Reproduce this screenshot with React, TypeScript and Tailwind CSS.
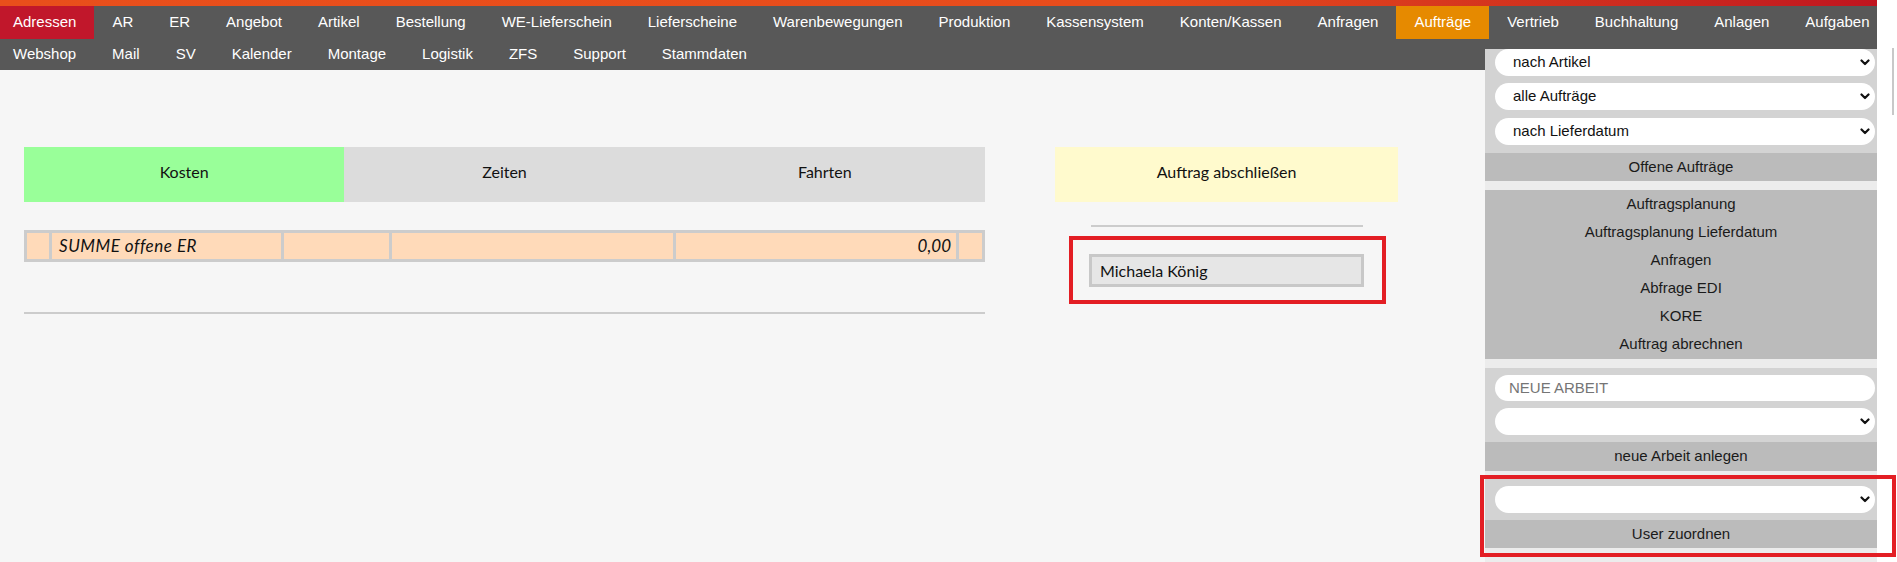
import React from "react";

const row1 = [
  "Adressen",
  "AR",
  "ER",
  "Angebot",
  "Artikel",
  "Bestellung",
  "WE-Lieferschein",
  "Lieferscheine",
  "Warenbewegungen",
  "Produktion",
  "Kassensystem",
  "Konten/Kassen",
  "Anfragen",
  "Aufträge",
  "Vertrieb",
  "Buchhaltung",
  "Anlagen",
  "Aufgaben",
];
const row2 = ["Webshop", "Mail", "SV", "Kalender", "Montage", "Logistik", "ZFS", "Support", "Stammdaten"];

const arial = "font-['Liberation_Sans',Arial,sans-serif]";
const calibri = "font-['Lato','Open_Sans',sans-serif]";

function Chevron() {
  return (
    <svg width="10" height="7" viewBox="0 0 10 7" className="shrink-0">
      <path d="M1.5 1.5 L5 5 L8.5 1.5" fill="none" stroke="#111" strokeWidth="2.2" strokeLinecap="round" strokeLinejoin="round" />
    </svg>
  );
}

function FakeSelect({ label, className = "" }: { label?: string; className?: string }) {
  return (
    <div
      className={`ml-[10px] flex h-[27px] w-[380px] items-center justify-between rounded-full bg-white pl-[18px] pr-[5px] text-[15px] text-[#111] ${className}`}
    >
      <span>{label ?? ""}</span>
      <Chevron />
    </div>
  );
}

function Band({ children, className = "" }: { children: React.ReactNode; className?: string }) {
  return (
    <div className={`flex h-[28px] items-center justify-center bg-[#bbbbbb] text-[15px] text-[#1a1a1a] ${className}`}>
      {children}
    </div>
  );
}

export default function App() {
  return (
    <div className={`flex h-[562px] w-[1897px] overflow-hidden bg-white ${arial}`}>
      <div className="relative h-[562px] w-[1877px] shrink-0 bg-[#f6f6f6]">
        {/* top gradient strip */}
        <div className="h-[6px] w-full bg-gradient-to-r from-[#e94f1b] via-[#e84c1c] via-60% to-[#c0141f]" />
        {/* nav */}
        <nav className="bg-[#585858] text-[15px] text-white">
          <div className="-ml-[5px] flex h-[33px] items-stretch whitespace-nowrap">
            {row1.map((t) => (
              <div
                key={t}
                className={`flex items-center px-[18px] ${
                  t === "Adressen" ? "bg-[#c1172b]" : t === "Aufträge" ? "bg-[#e68a00]" : ""
                }`}
              >
                {t}
              </div>
            ))}
          </div>
          <div className="-ml-[5px] flex h-[31px] items-stretch whitespace-nowrap">
            {row2.map((t) => (
              <div key={t} className="flex items-center px-[18px]">
                {t}
              </div>
            ))}
          </div>
        </nav>

        {/* main content */}
        <div className="flex pl-[24px] pt-[77px]">
          <div className="w-[961px]">
            <div className={`grid h-[55px] grid-cols-3 text-[16px] text-[#111] ${calibri}`}>
              <div className="flex items-center justify-center bg-[#99ff99] pb-[6px]">Kosten</div>
              <div className="flex items-center justify-center bg-[#dcdcdc] pb-[6px]">Zeiten</div>
              <div className="flex items-center justify-center bg-[#dcdcdc] pb-[6px]">Fahrten</div>
            </div>
            <div
              className={`mt-[28px] grid h-[32px] grid-cols-[22px_229px_105px_281px_280px_23px] gap-[3px] bg-[#cccccc] p-[3px] text-[17px] italic text-[#111] ${calibri}`}
            >
              <div className="bg-[#ffdab9]" />
              <div className="flex items-center bg-[#ffdab9] pl-[7px] tracking-[0.03em]">SUMME offene ER</div>
              <div className="bg-[#ffdab9]" />
              <div className="bg-[#ffdab9]" />
              <div className="flex items-center justify-end bg-[#ffdab9] pr-[5px]">0,00</div>
              <div className="bg-[#ffdab9]" />
            </div>
            <div className="mt-[50px] h-[2px] w-full bg-[#cccccc]" />
          </div>

          <div className={`ml-[70px] w-[343px] ${calibri}`}>
            <div className="flex h-[55px] items-center justify-center bg-[#fffacd] pb-[6px] text-[16px] text-[#111]">
              Auftrag abschließen
            </div>
            <div className="mx-auto mt-[23px] h-[2px] w-[272px] bg-[#cccccc]" />
            <div className="ml-[14px] mt-[9px] w-[317px] border-4 border-[#e31e24] pb-[13px] pl-[16px] pt-[14px]">
              <div className="flex h-[33px] w-[275px] items-center border-[3px] border-[#c8c8c8] bg-[#e6e6e6] pl-[8px] text-[16px] text-[#111]">
                Michaela König
              </div>
            </div>
          </div>
        </div>

        {/* right sidebar (overlaps nav) */}
        <aside className="absolute left-[1485px] top-[70px] h-[492px] w-[392px] bg-[#ececec]">
          <div className="bg-[#d3d3d3]">
            <FakeSelect label="nach Artikel" className="relative -mt-[21px]" />
            <FakeSelect label="alle Aufträge" className="mt-[7px]" />
            <FakeSelect label="nach Lieferdatum" className="mt-[8px]" />
            <Band className="mt-[8px]">Offene Aufträge</Band>
          </div>
          <div className="mt-[9px] bg-[#bbbbbb] pb-[1px]">
            {["Auftragsplanung", "Auftragsplanung Lieferdatum", "Anfragen", "Abfrage EDI", "KORE", "Auftrag abrechnen"].map(
              (t) => (
                <Band key={t}>{t}</Band>
              )
            )}
          </div>
          <div className="mt-[9px] bg-[#d3d3d3] pt-[7px]">
            <div className="ml-[10px] flex h-[26px] w-[380px] items-center rounded-full bg-white pl-[14px] text-[15px] text-[#757575]">
              NEUE ARBEIT
            </div>
            <FakeSelect className="mt-[7px]" />
            <Band className="mt-[7px] h-[29px]">neue Arbeit anlegen</Band>
          </div>
          <div className="mt-[8px] bg-[#d3d3d3] pt-[7px]">
            <FakeSelect />
            <Band className="mt-[7px]">User zuordnen</Band>
          </div>
        </aside>
      </div>

      {/* scrollbar strip */}
      <div className="relative w-[20px] shrink-0 bg-white">
        <div className="ml-[15px] mt-[48px] h-[67px] w-[2px] bg-[#c8c8c8]" />
      </div>

      {/* annotation box around user assignment */}
      <div className="pointer-events-none absolute left-[1480px] top-[475px] h-[82px] w-[416px] border-4 border-[#e31e24]" />
    </div>
  );
}
